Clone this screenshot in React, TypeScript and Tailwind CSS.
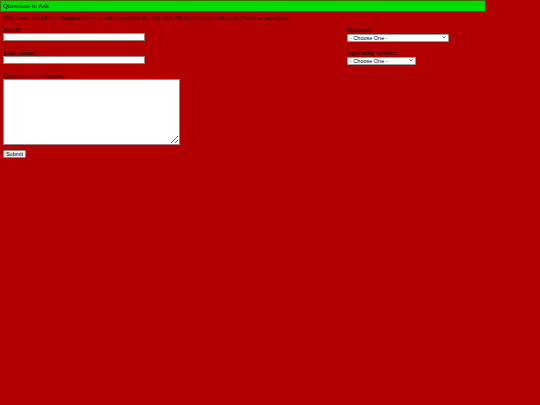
import { ReactNode } from "react";

function Label({ children, className = "" }: { children: ReactNode; className?: string }) {
  return <label className={`block h-[7px] leading-[7px] ${className}`}>{children}</label>;
}

function Choose({ width }: { width: string }) {
  return (
    <div className={`relative h-[8px] ${width}`}>
      <select className="h-full w-full appearance-none rounded-[1px] border border-[#9a9a9a] bg-white pl-[2px] font-['Liberation_Sans',sans-serif] text-[5.5px] leading-[6px] text-black outline-none">
        <option>- Choose One -</option>
      </select>
      <svg
        viewBox="0 0 10 10"
        className="pointer-events-none absolute right-[3px] top-[2px] h-[4px] w-[4px]"
        fill="none"
        stroke="#222"
        strokeWidth="2.2"
      >
        <path d="M1.5 3.5 L5 7 L8.5 3.5" />
      </svg>
    </div>
  );
}

export default function App() {
  return (
    <div className="h-[405px] w-[540px] overflow-hidden bg-[#b00000] font-['Liberation_Serif',serif] text-[6.75px] text-black">
      <div className="flex h-[12px] w-[486px] items-center border border-[#3f6a00] bg-[#00dd00] pl-[2px] leading-none">
        Questions to Ask
      </div>
      <p className="mt-[2px] px-[3px] leading-[8px]">
        This here would be a helpful form to ask questions on this site, I'll hope to be able to get back to you then.
      </p>
      <form className="mt-[4px] flex" onSubmit={(e) => e.preventDefault()}>
        <div className="w-[347px] pl-[3px]">
          <Label>Email:</Label>
          <input className="block h-[8px] w-[142px] border border-[#a08080] bg-white outline-none" />
          <Label className="mt-[8px]">User Name:</Label>
          <input className="block h-[8px] w-[142px] border border-[#a08080] bg-white outline-none" />
          <Label className="mt-[8px]">Question or Comment:</Label>
          <textarea className="block h-[66px] w-[177px] resize border border-[#a08080] bg-white outline-none" />
          <button
            type="submit"
            className="mt-[5px] block h-[8px] w-[23px] rounded-[1px] border border-[#8a8a8a] bg-[#efefef] font-['Liberation_Sans',sans-serif] text-[5.5px] leading-[6px] text-black"
          >
            Submit
          </button>
        </div>
        <div>
          <Label>Browser:</Label>
          <Choose width="w-[102px]" />
          <Label className="mt-[8px]">Operating System:</Label>
          <Choose width="w-[69px]" />
        </div>
      </form>
    </div>
  );
}
